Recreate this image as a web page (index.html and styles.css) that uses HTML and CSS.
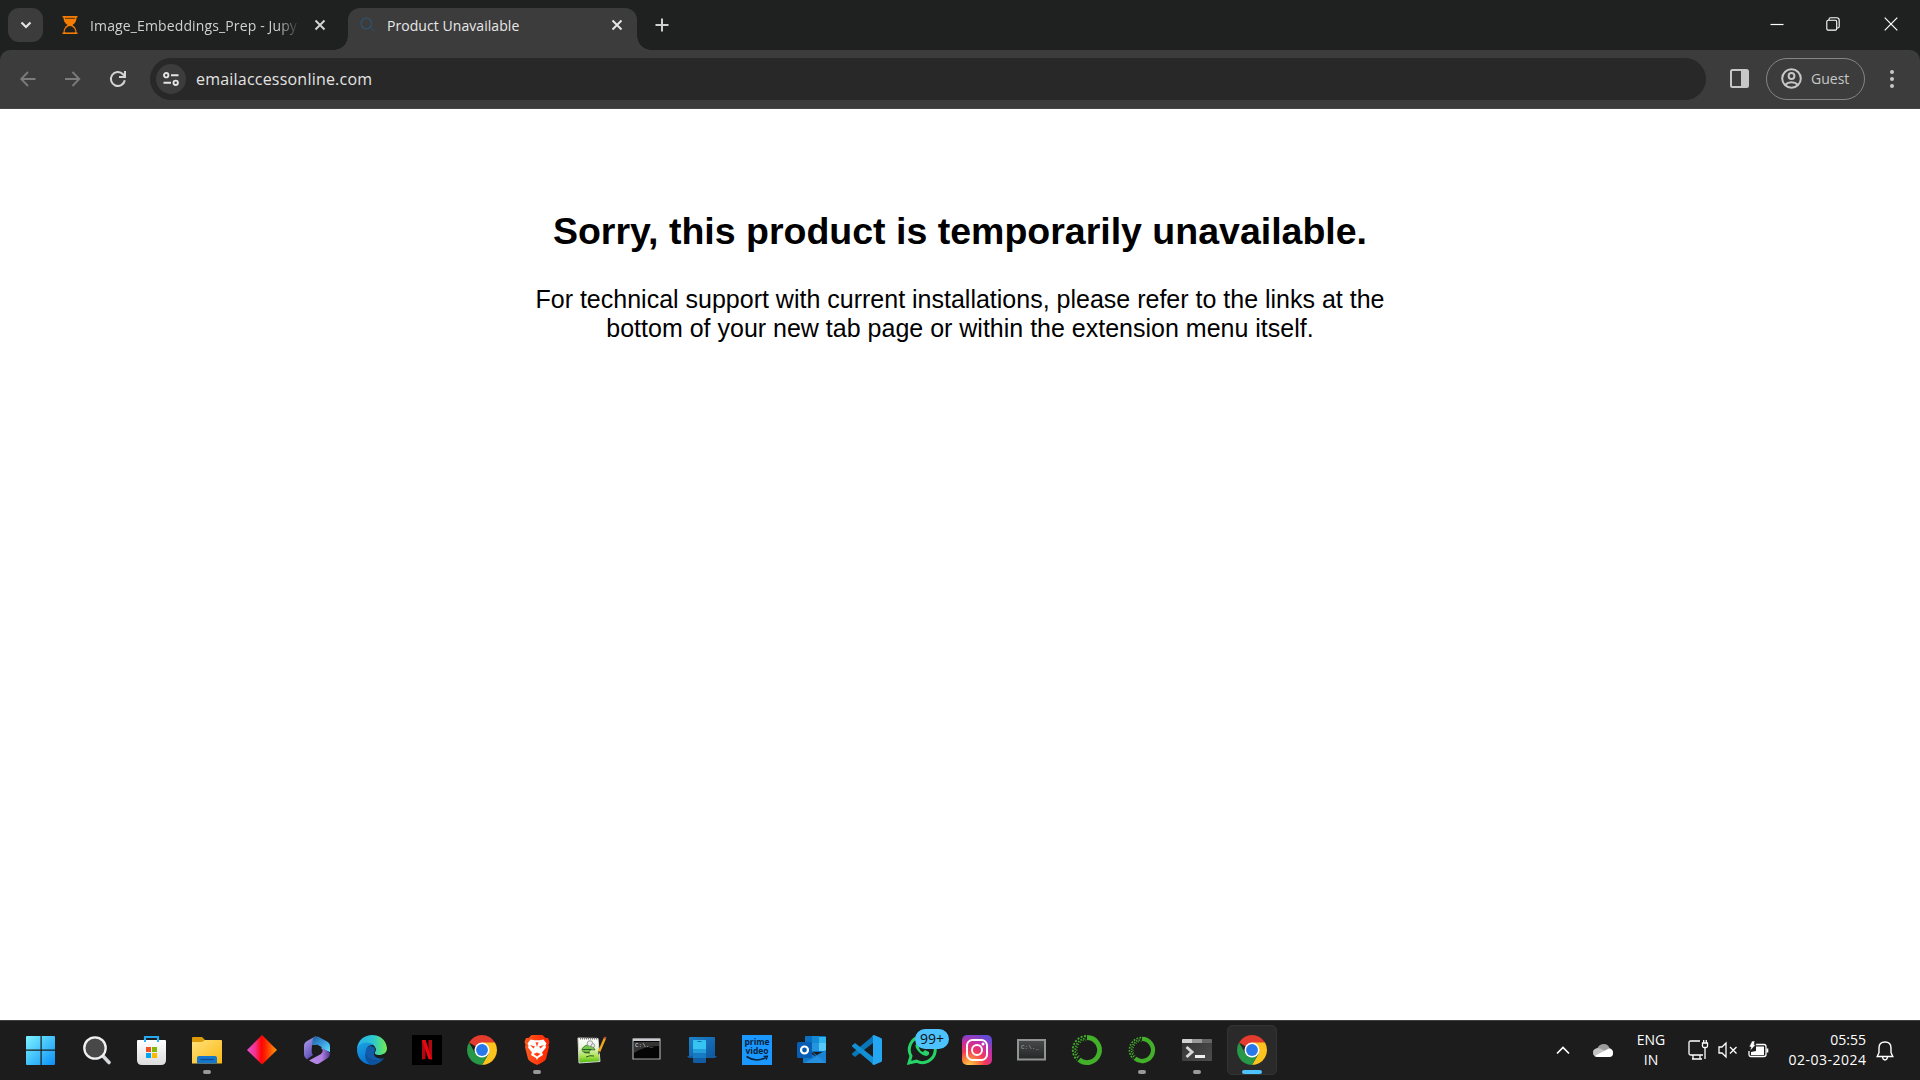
FILE: index.html
```html
<!DOCTYPE html>
<html lang="en">
<head>
<meta charset="utf-8">
<title>Product Unavailable</title>
<link rel="stylesheet" href="styles.css">
</head>
<body>
<div class="desktop">
  <header class="titlebar">
    <button class="tab-search" aria-label="Search tabs"><svg width="12" height="8" viewBox="0 0 12 8"><path d="M1.500 1.500 6 6l4.500-4.500" fill="none" stroke="#e3e3e3" stroke-width="2.200"/></svg></button>
    <div class="tab">
      <svg class="favicon" width="16" height="18" viewBox="0 0 16 18"><path d="M.5 0h15v1.500h-1c0 3-1 5.500-4 7.500 3 2 4 4.500 4 7.500h1V18H.5v-1.500h1c0-3 1-5.500 4-7.500-3-2-4-4.500-4-7.500h-1z" fill="#f57c00"/><path d="M3 2.300h10M3 16c0-3 2-5.500 5-5.500s5 2.500 5 5.500z" fill="#1f2120" stroke="#1f2120" stroke-width=".8"/></svg>
      <span class="tab-title fade">Image_Embeddings_Prep - Jupy</span>
      <svg class="close" width="12" height="12" viewBox="0 0 12 12"><path d="m1.500 1.500 9 9m0-9-9 9" stroke="#d5d5d5" stroke-width="1.900"/></svg>
    </div>
    <div class="tab active">
      <svg class="favicon" width="16" height="16" viewBox="0 0 16 16"><circle cx="6.300" cy="6.500" r="5.300" fill="none" stroke="#2d5371" stroke-width="1.200"/><path d="m10.500 10.500 4 4" stroke="#334757" stroke-width="1.500"/></svg>
      <span class="tab-title">Product Unavailable</span>
      <svg class="close" width="12" height="12" viewBox="0 0 12 12"><path d="m1.500 1.500 9 9m0-9-9 9" stroke="#e8e8e8" stroke-width="1.900"/></svg>
    </div>
    <svg class="new-tab" width="14" height="14" viewBox="0 0 14 14"><path d="M7 .5v13M.5 7h13" stroke="#d0d0d0" stroke-width="2"/></svg>
    <div class="window-controls">
      <svg width="14" height="14" viewBox="0 0 14 14"><path d="M.5 7.500h13" stroke="#fff" stroke-width="1.200"/></svg>
      <svg width="14" height="14" viewBox="0 0 14 14" fill="none" stroke="#fff" stroke-width="1.100"><rect x=".8" y="3.200" width="9.900" height="9.900" rx="1.300"/><path d="M3 3V2.300C3 1.400 3.600.8 4.500.8h6.200c1.500 0 2.500 1 2.500 2.500v6.200c0 .9-.6 1.500-1.500 1.500H11"/></svg>
      <svg width="14" height="14" viewBox="0 0 14 14"><path d="m.7.7 12.600 12.600m0-12.600L.7 13.300" stroke="#fff" stroke-width="1.200"/></svg>
    </div>
  </header>

  <nav class="toolbar-back">
    <div class="toolbar">
      <svg class="nav-icon" width="16" height="16" viewBox="0 0 16 16"><path d="M15.500 8H1.500M8 1 1.200 8 8 15" fill="none" stroke="#7b7b7b" stroke-width="1.800"/></svg>
      <svg class="nav-icon" width="16" height="16" viewBox="0 0 16 16"><path d="M0 8h14M7.500 1l6.800 7-6.800 7" fill="none" stroke="#7b7b7b" stroke-width="1.800"/></svg>
      <svg class="nav-icon" width="16" height="16" viewBox="0 0 16 16"><path d="M14.800 9.300A7 7 0 1 1 13 3.200l1.500 1.600" fill="none" stroke="#d4d4d4" stroke-width="2"/><path d="M15 0v6H9" fill="none" stroke="#d4d4d4" stroke-width="2"/></svg>
      <div class="omnibox">
        <span class="site-info"><svg width="16" height="14" viewBox="0 0 16 14" fill="none" stroke="#e3e3e3" stroke-width="1.900"><circle cx="3.200" cy="3.200" r="2.200"/><path d="M8 3.200h7.500M.5 10.800H8"/><circle cx="12.700" cy="10.800" r="2.200"/></svg></span>
        <span class="url">emailaccessonline.com</span>
      </div>
      <svg class="side-panel" width="19" height="19" viewBox="0 0 19 19"><rect x="1" y="1" width="17" height="17" rx="1.500" fill="none" stroke="#c7c7c7" stroke-width="2"/><path d="M11 1h7v17h-7z" fill="#c7c7c7"/></svg>
      <div class="profile">
        <svg width="21" height="21" viewBox="0 0 21 21" fill="none" stroke="#c7c7c7" stroke-width="2"><circle cx="10.500" cy="10.500" r="9.300"/><circle cx="10.500" cy="8" r="2.900"/><path d="M4 17c3.500-3.600 9.500-3.600 13 0"/></svg>
        <span class="guest">Guest</span>
      </div>
      <svg class="menu" width="4" height="18" viewBox="0 0 4 18" fill="#c7c7c7"><circle cx="2" cy="2" r="2"/><circle cx="2" cy="9" r="2"/><circle cx="2" cy="16" r="2"/></svg>
    </div>
  </nav>

  <main class="page">
    <h1 class="headline">Sorry, this product is temporarily unavailable.</h1>
    <p class="message">For technical support with current installations, please refer to the links at the<br>bottom of your new tab page or within the extension menu itself.</p>
  </main>

  <footer class="taskbar">
    <div class="apps">
      <div class="app"><svg viewBox="0 0 30 30"><defs><linearGradient id="win" x1="0" y1="0" x2="1" y2="1"><stop stop-color="#7df3ff"/><stop offset="1" stop-color="#0a90f8"/></linearGradient></defs><path d="M0 1h13.500v13.500H-1V2q0-1 1-1zM14.700 1H27q1 0 1 1v12.500H14.700zM-1 15.700h14.500V30H0q-1 0-1-1zM14.700 15.700H28V29q0 1-1 1H14.700z" fill="url(#win)"/></svg></div>
      <div class="app"><svg viewBox="0 0 30 30"><path d="m20 20 7 7.500" stroke="#d5d8da" stroke-width="3.600" stroke-linecap="round"/><circle cx="13" cy="13" r="10.700" fill="#484848" stroke="#f0f0f0" stroke-width="2.300"/></svg></div>
      <div class="app"><svg viewBox="0 0 30 30"><defs><linearGradient id="store" x1="0" y1="0" x2="0" y2="1"><stop stop-color="#fff"/><stop offset="1" stop-color="#dcdcdc"/></linearGradient></defs><path d="M8 7V2h13v5" fill="none" stroke="#27a9f0" stroke-width="2.200"/><path d="M0 6q0-1 1-1h27q1 0 1 1v19q0 5-5 5H5q-5 0-5-5z" fill="url(#store)"/><path d="M8 4v3M21 4v3" fill="none" stroke="#27b8ff" stroke-width="2"/><path d="M9 12h5v5H9z" fill="#f25022"/><path d="M15 12h5v5h-5z" fill="#7fba00"/><path d="M9 18h5v5H9z" fill="#00a4ef"/><path d="M15 18h5v5h-5z" fill="#ffb900"/></svg></div>
      <div class="app running"><svg viewBox="0 0 30 30"><defs><linearGradient id="fold" x1="0" y1="0" x2="1" y2="1"><stop stop-color="#ffe17a"/><stop offset="1" stop-color="#fcb813"/></linearGradient></defs><path d="M0 3q0-1 1-1h9l4 4v6H0z" fill="#dd9a08"/><path d="M0 7h10l3-2h16q1 0 1 1v22.500H0z" fill="url(#fold)"/><path d="M5 28.500V23q0-2 2-2h16q2 0 2 2v5.500z" fill="#1676cc"/><path d="M8.500 24.500h13" stroke="#0a4c90" stroke-width="1.200"/></svg></div>
      <div class="app"><svg viewBox="0 0 30 30"><defs><linearGradient id="dia"><stop stop-color="#e052d0"/><stop offset=".28" stop-color="#f4308c"/><stop offset=".48" stop-color="#ff0505"/><stop offset=".6" stop-color="#fb2000"/><stop offset="1" stop-color="#ff9b08"/></linearGradient></defs><path d="M15 0l15 15-15 14.500L0 15z" fill="url(#dia)"/></svg></div>
      <div class="app"><svg viewBox="0 0 30 30"><defs><linearGradient id="m1" x1="0" y1="0" x2=".6" y2="1"><stop stop-color="#b7a6ee"/><stop offset="1" stop-color="#5748b5"/></linearGradient><linearGradient id="m2" x1="0" y1="0" x2="1" y2="1"><stop stop-color="#195f9c"/><stop offset=".5" stop-color="#3998dd"/><stop offset="1" stop-color="#64e2ff"/></linearGradient><linearGradient id="m3" x1="0" y1="0" x2="1" y2="0"><stop stop-color="#b98bea"/><stop offset=".6" stop-color="#b07fe0"/><stop offset="1" stop-color="#503a91"/></linearGradient></defs><path d="m14 1-9 5q-3 1.700-3 5v8q0 3.500 3 5.200L11 20q-2-2-1-9 1-3 4-10z" fill="url(#m1)"/><path d="M11 3q2-2 5-1.500l9 5q3 1.700 3 5V17l-9-3-5-4H10z" fill="url(#m2)"/><path d="M7 25.500 19 19q2-2 2-6l7 5q0 3.500-3 5.500l-8 5q-2 1.200-4 0z" fill="url(#m3)"/><path d="M15 9.500l4.500 2.600v5L15 20l-4.500-2.600v-5z" fill="#1c1c1c"/></svg></div>
      <div class="app"><svg viewBox="0 0 30 30"><defs><linearGradient id="e1"><stop stop-color="#28afea"/><stop offset=".55" stop-color="#2bc8cf"/><stop offset="1" stop-color="#72ed4b"/></linearGradient><linearGradient id="e2" x1="0" y1="0" x2=".4" y2="1"><stop stop-color="#1ca3e3"/><stop offset="1" stop-color="#0871ce"/></linearGradient></defs><path d="M0 14C1-4 28-5 30 13c0 5-4 7-8 7-3 0-5-1-4-3 2-2 1-6-4-8-5-1-10 0-14 5z" fill="url(#e1)"/><path d="M0 15c1-7 10-10 16-5-6 0-8 5-6 10 2 4 5 8 9 9C8 32 0 24 0 15z" fill="url(#e2)"/><path d="M10 15c-2 6 4 12 11 10 2 0 4-1 6-2-2 4-8 7-12 7-6-2-9-9-5-15z" fill="#0d529e"/><path d="M13 11c-3 1-5 4-4 7 1 6 8 9 14 7l5-2c-6 2-11-1-11-6 2-2 1-6-4-6z" fill="#125ba9"/><path d="M17.500 17q-1 3 3.500 3.500t8-2q-1 3-3 4-7 2-9-3z" fill="#1c1c1c"/></svg></div>
      <div class="app"><svg viewBox="0 0 30 30"><path d="M0 0h30v30H0z" fill="#000"/><path d="M10 5h3.500v19l-3.500.5zM16.500 5H20v19.500l-3.500-.5z" fill="#b00710"/><path d="M10 5h3.600L20 24.500l-3.600-.5z" fill="#e50914"/></svg></div>
      <div class="app"><svg viewBox="0 0 48 48"><g id="chrome"><path d="M24 24 3.220 12A24 24 0 0 1 44.780 12z" fill="#e33b2e"/><path d="M24 24V12h20.780A24 24 0 0 1 24 48l10.400-18z" fill="#fcc31e"/><path d="M3.220 12A24 24 0 0 0 24 48l10.400-18H13.600z" fill="#279847"/><circle cx="24" cy="24" r="12" fill="#fff"/><circle cx="24" cy="24" r="9.500" fill="#2878e9"/></g></svg></div>
      <div class="app running"><svg viewBox="0 0 30 30"><defs><linearGradient id="brave"><stop stop-color="#ff5a20"/><stop offset="1" stop-color="#ff2200"/></linearGradient></defs><path d="M9.500 0h11l3 3H26l1.500 4-1 3 .5 2-3 12q-1 2.500-9 6-8-3.500-9-6L3 12l.5-2-1-3L4 3h2.500z" fill="url(#brave)"/><path d="m8.500 4.500 4 .8h5l4-.8 3 4-1 2 .5 2-4 5 1 2.500-5 3-1 2-1-2-5-3 1-2.500-4-5 .5-2-1-2z" fill="#fff"/><path d="m8 10 5 1.500-1.500 2zm14 0-5 1.500 1.500 2zM11.500 19l3.500-1.500 3.500 1.500-3.500 2.500zM13.500 7l1.500 5 1.500-5-1.500.6z" fill="#ff4217"/></svg></div>
      <div class="app"><svg viewBox="0 0 30 30"><defs><linearGradient id="npp" x1="0" y1="0" x2="0" y2="1"><stop stop-color="#fff"/><stop offset=".35" stop-color="#eef7e0"/><stop offset=".75" stop-color="#a5e048"/><stop offset="1" stop-color="#46b80a"/></linearGradient></defs><path d="m1 3 20 .5 2 23L2 28z" fill="url(#npp)" stroke="#d4d7cf"/><path d="M3 3.500h18" stroke="#777" stroke-width="2" stroke-dasharray="1 1"/><path d="M5 14q3-5 9-4 3 2 4 5-4-1-6 1 1 2-2 2-5 0-5-4z" fill="#73c84a" stroke="#3f6a2b" stroke-width=".8"/><path d="M5.500 14.500h9M7 17l6 1M9 22q4-2 8-1" fill="none" stroke="#2d5a24" stroke-width="1"/><circle cx="13" cy="8.500" r="2.800" fill="#eee" stroke="#888" stroke-width=".8"/><circle cx="16" cy="10.500" r="1.800" fill="#eee" stroke="#888" stroke-width=".8"/><path d="m28 3-6 14" stroke="#f3a816" stroke-width="2.300"/><path d="m28.500 2-.8 2" stroke="#b45345" stroke-width="2.300"/><path d="m21.500 16-.4 4 2.200-3z" fill="#333"/></svg></div>
      <div class="app"><svg viewBox="0 0 30 30"><path d="M1 4h27v20H1z" fill="#050505" stroke="#a8a8a8" stroke-width="1.200"/><path d="M1 3.500h27v2.500H1z" fill="#c9cbd0"/><path d="M2 7h25v4Q12 11 2 18z" fill="#343434"/><text x="3" y="11.500" class="console-label">C:\._</text></svg></div>
      <div class="app"><svg viewBox="0 0 30 30"><defs><linearGradient id="ph" x1="0" y1="0" x2="1" y2="1"><stop stop-color="#1f82c9"/><stop offset="1" stop-color="#0c58a1"/></linearGradient></defs><path d="M3 2h24q1 0 1 1v18H2V3q0-1 1-1z" fill="url(#ph)"/><path d="M0 21h30l-2 2H2z" fill="#155c9f"/><path d="M6 6q0-1 1-1h11q1 0 1 1v8H6z" fill="#36c5f3"/><path d="M6 14h13v4H6z" fill="#239fdc"/><path d="M6 18h13v5H6z" fill="#167bc2"/><path d="M6 23h13v4q0 1-1 1H7q-1 0-1-1z" fill="#125ca3"/><path d="M10.500 6.500h4" stroke="#126aa9"/></svg></div>
      <div class="app"><svg viewBox="0 0 30 30"><path d="M0 0h30v30H0z" fill="#1a98ff"/><text x="15" y="10" class="prime-label">prime</text><text x="15" y="18.500" class="prime-label">video</text><path d="M4.500 21.500Q14 28 24 22.500" fill="none" stroke="#08233b" stroke-width="1.600"/><path d="m21.500 21.300 4-.2-1.300 3.700" fill="none" stroke="#08233b" stroke-width="1.200"/></svg></div>
      <div class="app"><svg viewBox="0 0 30 30"><path d="M8 2q0-1 1-1h19q1 0 1 1v15H8z" fill="#0b70bf"/><path d="M15 1h7v7h-7z" fill="#1689d4"/><path d="M22 2h7v6h-7z" fill="#31b5ed"/><path d="M15 8h7v8h-7z" fill="#2495df"/><path d="M22 8h7v8h-7z" fill="#57c9f5"/><path d="m6 14 12 7 11-6v13H6z" fill="#1278c7"/><path d="M29 16 7 28h22z" fill="#2590e0"/><path d="m12 14 17 14V16l-10 5z" fill="#1b83d4"/><rect y="7" width="15" height="16" rx="1.500" fill="#075db3"/><circle cx="7.500" cy="15" r="3.500" fill="none" stroke="#fff" stroke-width="2.200"/></svg></div>
      <div class="app"><svg viewBox="0 0 30 30"><path d="M21 8 3 22l-3-2.500v-1L22 0z" fill="#0876b8"/><path d="M21 22 3 8 0 10.500v1L22 30z" fill="#138fd5"/><path d="m22 0 7 3q1 .5 1 1.500v21q0 1-1 1.500l-7 3-2-1 1-1V2l-1-1z" fill="#25a6f2"/></svg></div>
      <div class="app"><svg viewBox="0 0 30 30"><path d="m2 28 2-7A13 13 0 1 1 9.500 26.200z" fill="none" stroke="#25d366" stroke-width="3"/><path d="M10 8c-3 2-1 6 2 9s8 6 10 2v-2l-4-2-2 2q-3-1-4-4l1-2-1.500-3z" fill="#25d366"/></svg><span class="badge">99+</span></div>
      <div class="app"><svg viewBox="0 0 30 30"><defs><radialGradient id="ig" cx=".25" cy="1.050" r="1.100"><stop stop-color="#ffd35c"/><stop offset=".2" stop-color="#ff9838"/><stop offset=".48" stop-color="#f23958"/><stop offset=".75" stop-color="#cc2da3"/><stop offset="1" stop-color="#6649d4"/></radialGradient></defs><rect width="30" height="30" rx="5" fill="url(#ig)"/><g fill="none" stroke="#fff" stroke-width="2"><rect x="5" y="5" width="20" height="20" rx="5.500"/><circle cx="15" cy="15" r="5"/></g><circle cx="21" cy="9" r="1.500" fill="#fff"/></svg></div>
      <div class="app"><svg viewBox="0 0 30 30"><defs><linearGradient id="con" x1="0" y1="0" x2="0" y2="1"><stop stop-color="#484a4b"/><stop offset="1" stop-color="#252727"/></linearGradient></defs><path d="M1 5h27v19.500H1z" fill="url(#con)" stroke="#929494" stroke-width="2"/><text x="4" y="14" class="console-label dim">C:\._</text></svg></div>
      <div class="app"><svg viewBox="0 0 30 30"><g id="anaconda" fill="none" stroke="#43b02a"><path d="M15 2.500A12.500 12.500 0 1 1 7 24.600" stroke-width="4.800"/><path d="M14 1A14 14 0 0 0 5 25" stroke-width="1.800" stroke-dasharray="2 1.500"/><path d="M14 3.300A12 12 0 0 0 6.500 23.500" stroke-width="1.700" stroke-dasharray="1.500 1.300" stroke-dashoffset="1.200"/><path d="M14.500 5A10 10 0 0 0 8 22.300" stroke-width="1.200" stroke-dasharray="1 2"/></g></svg></div>
      <div class="app running"><svg viewBox="-2 -2 34 34"><use href="#anaconda"/></svg></div>
      <div class="app running"><svg viewBox="0 0 30 30"><defs><linearGradient id="term" x1="0" y1="0" x2="1" y2="1"><stop stop-color="#333"/><stop offset="1" stop-color="#4d4d4d"/></linearGradient></defs><rect y="4" width="30" height="22" rx="1" fill="url(#term)"/><path d="M0 8V5q0-1 1-1h9v4z" fill="#d2d2d2"/><path d="M10 4h10v4H10z" fill="#999"/><path d="M20 4h9q1 0 1 1v3H20z" fill="#666"/><path d="m4.500 12 5.500 5-5.500 5" fill="none" stroke="#d7d7d7" stroke-width="3"/><path d="M13 20h10v3H13z" fill="#f0f0f0"/></svg></div>
      <div class="app current"><svg viewBox="0 0 48 48"><use href="#chrome"/></svg></div>
    </div>
    <div class="tray">
      <svg class="chevron" width="14" height="9" viewBox="0 0 14 9"><path d="m1 7.500 6-6 6 6" fill="none" stroke="#fff" stroke-width="1.700"/></svg>
      <svg class="cloud" width="20" height="14" viewBox="0 0 20 14"><path d="M4 5q2-5 7-5 4 0 5.500 4Q20 5 20 9t-4 4H5Q0 13 0 9q0-4 4-4z" fill="#9c9c9c"/><path d="M4 4q4 0 8 3l-8 5-3-1q-3-5 3-7z" fill="#c2c2c2"/><path d="M1.500 12 12 6.500l4-2Q20 5 20 9t-4 4H5q-2 0-3.500-1z" fill="#fff"/></svg>
      <div class="language"><span>ENG</span><span>IN</span></div>
      <div class="status">
        <svg width="20" height="20" viewBox="0 0 20 20" fill="none" stroke="#fff" stroke-width="1.300"><path d="M12 1H2.500Q1 1 1 2.500v11Q1 15 2.500 15H15M5 15v4M4 19h10M12 15v4M17 8v11"/><path d="M14.500 3h5v3q0 1.500-1.500 1.500h-2q-1.500 0-1.500-1.500zM15.700 0v3M18.300 0v3"/></svg>
        <svg width="20" height="16" viewBox="0 0 20 16" fill="none" stroke="#fff" stroke-width="1.300"><path d="M1 5h3l4-4v14l-4-4H1zM12 5l6.500 6.500M18.500 5 12 11.500"/></svg>
        <svg width="21" height="18" viewBox="0 0 21 18"><path d="M8 3.500h8q2 0 2 2v8q0 2-2 2H3q-2 0-2-2V10" fill="none" stroke="#fff" stroke-width="1.300"/><path d="M8 5.500h8V14H3v-3l5-1z" fill="#fff"/><path d="M18.500 7.500h1.800v4h-1.800z" fill="#fff"/><path d="M4 0h3L6 3.500h2L2 10l1-4H1z" fill="#fff" stroke="#1c1c1c" stroke-width=".6"/></svg>
      </div>
      <div class="clock"><span>05:55</span><span>02-03-2024</span></div>
      <svg class="bell" width="18" height="20" viewBox="0 0 18 20" fill="none" stroke="#fff" stroke-width="1.400"><path d="M1.200 15.500h15.600L15 11.500V7Q15 1 9 1T3 7v4.500zM6.500 16q.5 3 2.500 3t2.500-3"/></svg>
    </div>
  </footer>
</div>
</body>
</html>
```
FILE: styles.css
```css
* { box-sizing: border-box; }
body { margin: 0; font-family: "Open Sans", "Noto Sans", sans-serif; overflow: hidden; }
svg { display: block; flex: none; overflow: visible; }

.desktop { display: grid; grid-template-columns: 1920px; grid-template-rows: 50px 59px 911px 60px; width: 1920px; height: 1080px; }

.titlebar { display: flex; background: #1f2120; padding-left: 8px; }
.tab-search { display: grid; place-items: center; width: 35px; height: 34px; margin-top: 8px; padding: 0; border: 0; border-radius: 11px; background: #3c3c3c; }
.tab { display: flex; align-items: center; width: 290px; height: 42px; margin-top: 8px; padding: 0 12px; font-size: 14px; color: #d0d0d0; position: relative; }
.tab:not(.active) { margin-left: 7px; }
.tab .favicon { margin-top: -8px; }
.tab-title { width: 210px; margin: -7px 0 0 12px; white-space: nowrap; letter-spacing: .13px; line-height: 24px; }
.fade { -webkit-mask-image: linear-gradient(90deg, #000 89%, transparent 100%); mask-image: linear-gradient(90deg, #000 89%, transparent 100%); }
.tab .close { margin: -8px 0 0 14px; }
.tab.active { width: 289px; margin-left: 8px; padding-left: 12px; border-radius: 12px 12px 0 0; background: #3c3c3c; color: #e8e8e8; }
.active .tab-title { margin-left: 11px; letter-spacing: .06px; }
.active .close { margin-left: 14px; }
.active::before, .active::after { content: ""; position: absolute; bottom: 0; width: 14px; height: 14px; }
.active::before { right: 100%; background: radial-gradient(circle at 0 0, transparent 13.500px, #3c3c3c 14px); }
.active::after { left: 100%; background: radial-gradient(circle at 100% 0, transparent 13.500px, #3c3c3c 14px); }
.new-tab { margin: 18px 0 0 18px; }
.window-controls { display: flex; margin: 17px 22px 0 auto; gap: 43px; }
.window-controls svg:first-child { margin-right: -1px; }
.window-controls svg:last-child { margin-left: 1px; }

.toolbar-back { background: #1f2120; }
.toolbar { display: flex; align-items: center; height: 59px; padding: 0 20px 1px 20px; background: #3c3c3c; border-bottom: 1px solid #494545; border-radius: 10px 10px 0 0; }
.nav-icon { margin-right: 29px; }
.omnibox { display: flex; flex: none; align-items: center; width: 1556px; height: 42px; margin-left: -5px; padding-left: 6px; border-radius: 21px; background: #282828; }
.site-info { display: grid; place-items: center; width: 30px; height: 30px; border-radius: 50%; background: #3c3c3c; }
.url { margin: 1px 0 0 10px; font-size: 16px; letter-spacing: .21px; color: #e3e3e3; }
.side-panel { margin-left: 24px; }
.profile { display: flex; flex: none; align-items: center; width: 99px; height: 42px; margin-left: 17px; padding-left: 14px; border: 1px solid #858585; border-radius: 21px; }
.guest { margin-left: 9px; font-size: 14px; color: #c7c7c7; }
.menu { margin-left: 25px; }

.page { padding-top: 100px; background: #fff; color: #000; text-align: center; font-family: "Liberation Sans", Arial, sans-serif; }
.headline { margin: 0; font-size: 37.500px; line-height: 44px; }
.message { margin: 32px 0 0; font-size: 25px; line-height: 29px; }

.taskbar { display: flex; justify-content: space-between; background: #1c1c1c; border-top: 1px solid #3f3f3f; color: #fff; }
.apps { display: flex; gap: 25px; padding: 14px 0 0 27px; }
.app { position: relative; width: 30px; height: 30px; }
.app svg { position: relative; width: 30px; height: 30px; }
.running::after, .current::after { content: ""; position: absolute; left: 11px; top: 35px; width: 8px; height: 4px; border-radius: 2px; background: #999; }
.current::before { content: ""; position: absolute; inset: -10px; border: 1px solid #333; border-radius: 5px; background: #2a2a2a; }
.current::after { left: 5px; width: 20px; background: #4cc2ff; }
.badge { position: absolute; left: 8px; top: -6px; width: 34px; height: 20px; border-radius: 10px; background: #4cc2ff; color: #111; font-size: 14px; line-height: 20px; text-align: center; }
.console-label { font: 6px "Liberation Mono", monospace; fill: #ddd; }
.dim { fill: #aaa; }
.prime-label { font: bold 8.500px "Open Sans", sans-serif; fill: #08233b; text-anchor: middle; }

.tray { display: flex; align-items: center; padding-right: 26px; font-size: 14px; line-height: 20px; }
.cloud { margin-left: 23px; }
.language { display: flex; flex-direction: column; align-items: center; width: 32px; margin: -1px 0 0 22px; }
.status { display: flex; align-items: center; gap: 10px; margin: -1px 0 0 21px; }
.clock { display: flex; flex-direction: column; align-items: flex-end; width: 82px; margin: -2px 0 0 15px; white-space: nowrap; }
.clock span:last-child { letter-spacing: .5px; margin-right: -.5px; }
.bell { margin-left: 10px; }
```
